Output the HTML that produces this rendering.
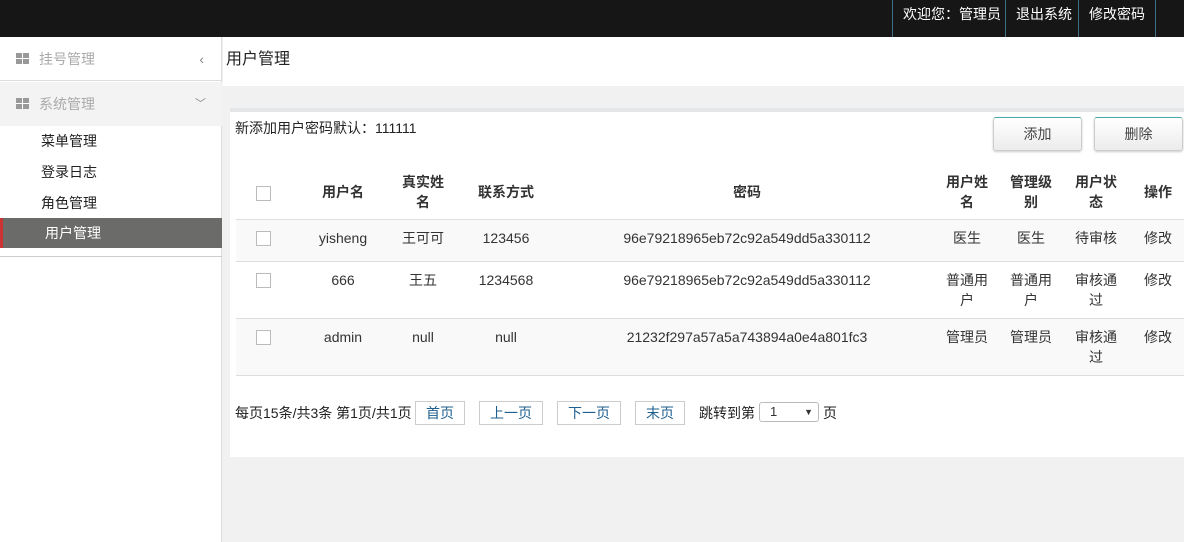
<!DOCTYPE html>
<html><head><meta charset="utf-8"><style>
*{margin:0;padding:0;box-sizing:border-box}
body{width:1184px;height:542px;overflow:hidden;background:#f1f1f1;font-family:"Liberation Sans","Noto Sans CJK SC",sans-serif;font-size:14px;color:#333;position:relative}
.top{position:absolute;left:0;top:0;width:1184px;height:37px;background:#161616}
.top .it{position:absolute;top:0;height:37px;line-height:28px;color:#fff;font-size:14px;border-left:1px solid #3d6f86;padding:0 10px}
.side{position:absolute;left:0;top:37px;width:222px;height:505px;background:#fff;border-right:1px solid #ddd}
.grp{position:absolute;left:0;width:222px;height:44px;line-height:44px;color:#aaa;padding-left:39px}
.grp .ic{position:absolute;left:16px;top:16px;width:13px;height:11px;background:
linear-gradient(#fff,#fff) 6px 0/1px 11px no-repeat,linear-gradient(#fff,#fff) 0 5px/13px 1px no-repeat,#999}
.sub{position:absolute;left:41px;color:#222}
.main-h{position:absolute;left:223px;top:37px;width:961px;height:49px;background:#fff;font-size:16px;line-height:46px;padding-left:3px;color:#222}
.panel{position:absolute;left:230px;top:108px;width:954px;height:349px;background:#fff;border-top:4px solid #e4e6e8}
.btn{position:absolute;top:117px;width:89px;height:34px;border:1px solid #ccc;border-top:1px solid #4aa;border-radius:3px;background:linear-gradient(#fff,#ececec);text-align:center;line-height:32px;color:#444;box-shadow:0 1px 2px #ccc}
table{position:absolute;left:236px;top:165px;width:948px;border-collapse:collapse}
td,th{text-align:center;vertical-align:top;font-size:14px;line-height:20px}
th{font-weight:bold;height:54px;vertical-align:middle;color:#333}
tr.r td{border-top:1px solid #ddd;padding-top:8px}
.cb{display:inline-block;width:15px;height:15px;border:1px solid #bbb;background:#fff;vertical-align:middle}
.pg{position:absolute;top:401px;height:24px;border:1px solid #ccc;text-align:center;line-height:22px;color:#1f5f8f;background:#fff}
</style></head><body>
<div class="top">
<div class="it" style="left:892px">欢迎您：管理员</div>
<div class="it" style="left:1005px">退出系统</div>
<div class="it" style="left:1078px;border-right:1px solid #3d6f86">修改密码</div>
</div>
<div class="side">
<div class="grp" style="top:0;border-bottom:1px solid #ddd"><span class="ic"></span>挂号管理<span style="position:absolute;right:18px;color:#888">‹</span></div>
<div class="grp" style="top:45px;background:#f3f3f3"><span class="ic"></span>系统管理<span style="position:absolute;right:16px;color:#888;font-size:11px">﹀</span></div>
<div class="sub" style="top:94px">菜单管理</div>
<div class="sub" style="top:125px">登录日志</div>
<div class="sub" style="top:156px">角色管理</div>
<div style="position:absolute;left:0;top:181px;width:222px;height:30px;background:#6b6b69;border-left:3px solid #c33;color:#fff;line-height:30px;padding-left:42px">用户管理</div>
<div style="position:absolute;left:0;top:219px;width:222px;border-top:1px solid #ccc"></div>
</div>
<div class="main-h">用户管理</div>
<div class="panel"></div>
<div style="position:absolute;left:235px;top:118px;color:#222">新添加用户密码默认：111111</div>
<div class="btn" style="left:993px">添加</div>
<div class="btn" style="left:1094px">删除</div>
<table>
<colgroup><col style="width:54px"><col style="width:106px"><col style="width:54px"><col style="width:112px"><col style="width:370px"><col style="width:70px"><col style="width:58px"><col style="width:72px"><col style="width:52px"></colgroup>
<tr><th><span class="cb"></span></th><th>用户名</th><th>真实姓<br>名</th><th>联系方式</th><th>密码</th><th>用户姓<br>名</th><th>管理级<br>别</th><th>用户状<br>态</th><th>操作</th></tr>
<tr class="r" style="background:#f9f9f9;height:42px"><td><span class="cb"></span></td><td>yisheng</td><td>王可可</td><td>123456</td><td>96e79218965eb72c92a549dd5a330112</td><td>医生</td><td>医生</td><td>待审核</td><td>修改</td></tr>
<tr class="r" style="height:57px"><td><span class="cb"></span></td><td>666</td><td>王五</td><td>1234568</td><td>96e79218965eb72c92a549dd5a330112</td><td>普通用<br>户</td><td>普通用<br>户</td><td>审核通<br>过</td><td>修改</td></tr>
<tr class="r" style="background:#f9f9f9;height:57px;border-bottom:1px solid #ddd"><td><span class="cb"></span></td><td>admin</td><td>null</td><td>null</td><td>21232f297a57a5a743894a0e4a801fc3</td><td>管理员</td><td>管理员</td><td>审核通<br>过</td><td>修改</td></tr>
</table>
<div style="position:absolute;left:235px;top:403px;color:#222">每页15条/共3条 第1页/共1页</div>
<div class="pg" style="left:415px;width:50px">首页</div>
<div class="pg" style="left:479px;width:64px">上一页</div>
<div class="pg" style="left:557px;width:64px">下一页</div>
<div class="pg" style="left:635px;width:50px">末页</div>
<div style="position:absolute;left:699px;top:403px;color:#222">跳转到第</div>
<div style="position:absolute;left:759px;top:402px;width:60px;height:20px;border:1px solid #bbb;border-radius:3px;background:#fff;font-size:13px;line-height:18px;padding-left:10px">1<span style="position:absolute;right:5px;font-size:9px">▼</span></div>
<div style="position:absolute;left:823px;top:403px;color:#222">页</div>
</body></html>
